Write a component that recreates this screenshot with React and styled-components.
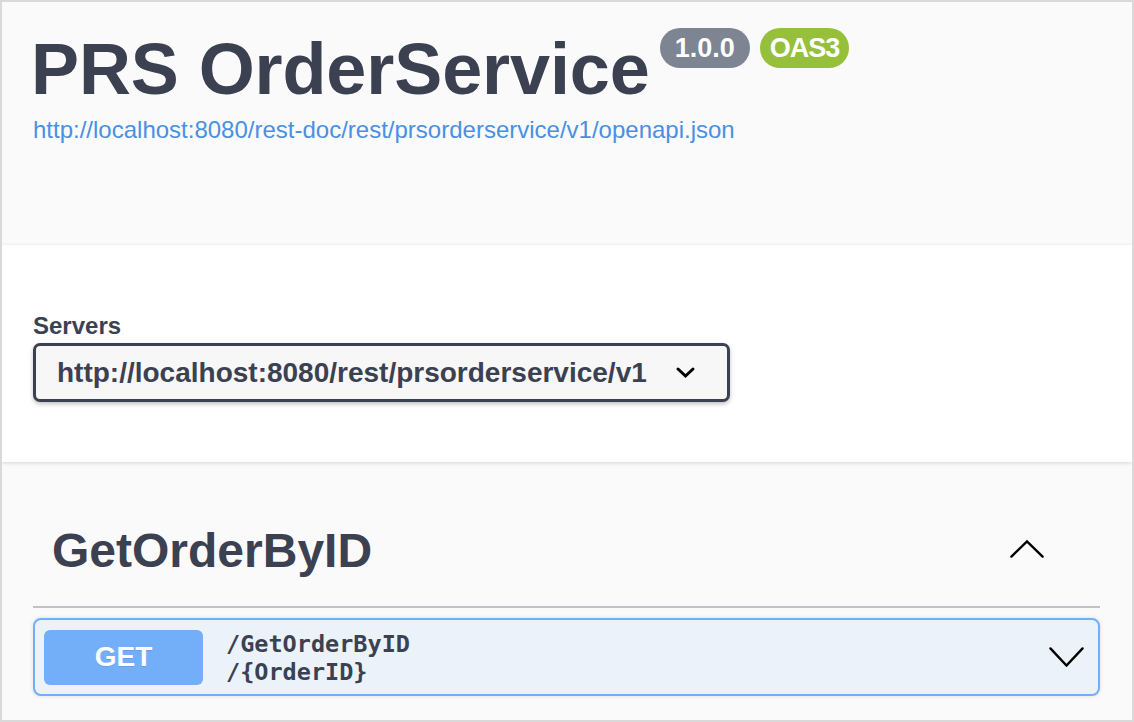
import React from 'react';
import styled, { createGlobalStyle } from 'styled-components';

const GlobalStyle = createGlobalStyle`
  html, body {
    margin: 0;
    padding: 0;
    background: #fafafa;
  }
  * {
    box-sizing: border-box;
  }
`

const Frame = styled.div`
  height: 722px;
  border: 2px solid #d9d9d9;
  background: #fafafa;
  overflow: hidden;
  font-family: "Liberation Sans", Arial, sans-serif;
  color: #3b4151;
`

// info block

const Info = styled.section`
  height: 243px;
  padding: 31px 31px 0;
  background: #fafafa;
`

const TitleRow = styled.div`
  display: flex;
  align-items: flex-start;
  gap: 10px;
`

const Title = styled.h2`
  margin: 0 0 0 -2px;
  font-size: 72px;
  line-height: 72px;
  font-weight: 700;
  letter-spacing: -0.1px;
  white-space: nowrap;
`

const Badges = styled.div`
  display: flex;
  gap: 10px;
  margin-top: -5px;
`

const Badge = styled.span`
  display: inline-block;
  height: 40px;
  padding: 0 ${p => p.$pad || 15}px;
  border-radius: 20px;
  background: ${p => p.$color};
  color: #fff;
  font-size: 27px;
  line-height: 40px;
  font-weight: 700;
  letter-spacing: ${p => p.$tight ? '-1px' : '0'};
`

const SpecLink = styled.a`
  display: block;
  margin-top: 11px;
  font-size: 24px;
  line-height: 28px;
  color: #4a90e2;
  text-decoration: none;
`

// servers

const Servers = styled.section`
  position: relative;
  background: #fff;
  padding: 67px 31px 60px;
  box-shadow: 0 1px 4px 0 rgba(0, 0, 0, 0.15);
`

const Label = styled.div`
  font-size: 24px;
  line-height: 28px;
  font-weight: 700;
  margin-bottom: 3px;
`

const Select = styled.div`
  width: 697px;
  height: 59px;
  display: flex;
  align-items: center;
  justify-content: space-between;
  padding: 0 31px 0 21px;
  border: 3px solid #3b4151;
  border-radius: 7px;
  background: #f7f7f7;
  box-shadow: 0 2px 4px 0 rgba(0, 0, 0, 0.25);
  font-size: 28px;
  font-weight: 700;
  white-space: nowrap;
`

// operations

const Operations = styled.section`
  padding: 45px 32px 0 31px;
`

const TagRow = styled.div`
  display: flex;
  align-items: center;
  justify-content: space-between;
  padding: 20px 55px 31px 19px;
  border-bottom: 2px solid rgba(59, 65, 81, 0.3);
`

const TagTitle = styled.h3`
  margin: 0;
  font-size: 48px;
  line-height: 48px;
  font-weight: 700;
`

const Opblock = styled.div`
  margin-top: 10px;
  height: 78px;
  display: flex;
  align-items: center;
  padding: 0 13px 0 9px;
  border: 2px solid #73aff8;
  border-radius: 8px;
  background: #ebf2fa;
  box-shadow: 0 0 4px rgba(0, 0, 0, 0.12);
`

const Method = styled.span`
  width: 159px;
  height: 55px;
  display: flex;
  align-items: center;
  justify-content: center;
  border-radius: 6px;
  background: #73aff8;
  color: #fff;
  font-size: 28px;
  font-weight: 700;
  text-shadow: 0 1px 0 rgba(0, 0, 0, 0.1);
`

const Path = styled.div`
  flex: 1;
  margin-left: 23px;
  padding-top: 2px;
  font-family: "DejaVu Sans Mono", "Liberation Mono", monospace;
  font-size: 23.5px;
  line-height: 28px;
  font-weight: 700;
  color: #3b4151;
`

const Chevron = ({ up, width, height, stroke }) => (
  <svg width={width} height={height} viewBox={`0 0 ${width} ${height}`} fill="none">
    <polyline
      points={up
        ? `${stroke},${height - stroke} ${width / 2},${stroke} ${width - stroke},${height - stroke}`
        : `${stroke},${stroke} ${width / 2},${height - stroke} ${width - stroke},${stroke}`}
      stroke="#000"
      strokeWidth={stroke}
      strokeLinecap="round"
      strokeLinejoin="miter"
    />
  </svg>
)

const ToggleIcon = styled.span`
  display: flex;
  margin-bottom: ${p => p.$lift || 0}px;
`

const App = () => (
  <>
    <GlobalStyle />
    <Frame>
      <Info>
        <TitleRow>
          <Title>PRS OrderService</Title>
          <Badges>
            <Badge $color="#7d8492">1.0.0</Badge>
            <Badge $color="#96bf3b" $pad={10} $tight>OAS3</Badge>
          </Badges>
        </TitleRow>
        <SpecLink href="#">http://localhost:8080/rest-doc/rest/prsorderservice/v1/openapi.json</SpecLink>
      </Info>

      <Servers>
        <Label>Servers</Label>
        <Select>
          <span>http://localhost:8080/rest/prsorderservice/v1</span>
          <Chevron width={21} height={13} stroke={3} />
        </Select>
      </Servers>

      <Operations>
        <TagRow>
          <TagTitle>GetOrderByID</TagTitle>
          <ToggleIcon $lift={5}>
            <Chevron up width={36} height={20} stroke={2.4} />
          </ToggleIcon>
        </TagRow>
        <Opblock>
          <Method>GET</Method>
          <Path>
            <div>/GetOrderByID</div>
            <div>/{'{OrderID}'}</div>
          </Path>
          <ToggleIcon>
            <Chevron width={37} height={22} stroke={2.4} />
          </ToggleIcon>
        </Opblock>
      </Operations>
    </Frame>
  </>
)

export default App;
